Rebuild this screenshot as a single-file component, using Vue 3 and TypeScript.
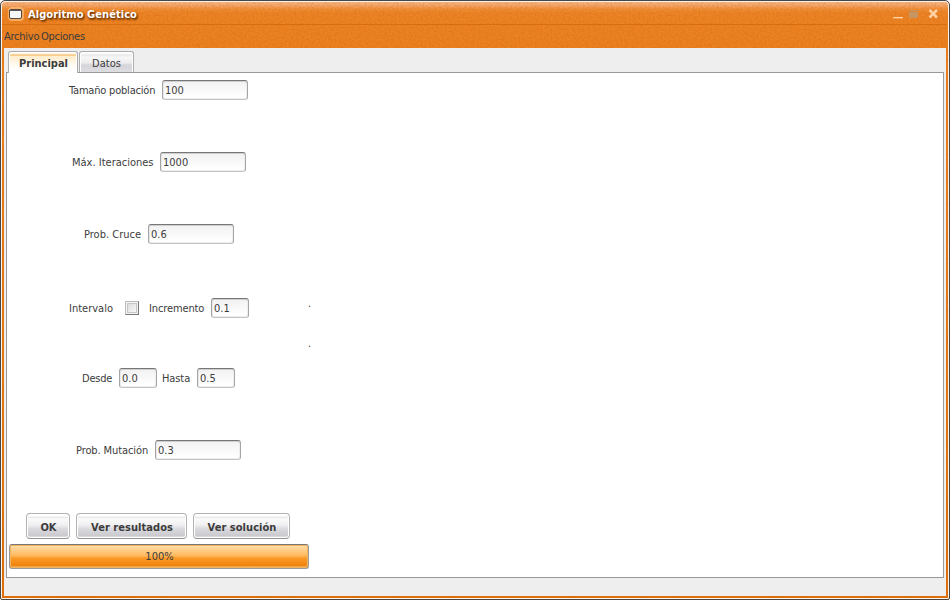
<script setup lang="ts">
import { ref } from 'vue'

interface Field {
  label: string
  value: string
  kind: string
}

const rows = ref<{ name: string; fields: Field[] }[]>([
  { name: 'population', fields: [{ label: 'Tamaño población', value: '100', kind: 'wide' }] },
  { name: 'iterations', fields: [{ label: 'Máx. Iteraciones', value: '1000', kind: 'wide' }] },
  { name: 'crossover', fields: [{ label: 'Prob. Cruce', value: '0.6', kind: 'wide' }] },
  {
    name: 'interval',
    fields: [
      { label: 'Intervalo', value: '', kind: 'check' },
      { label: 'Incremento', value: '0.1', kind: 'small' },
    ],
  },
  {
    name: 'range',
    fields: [
      { label: 'Desde', value: '0.0', kind: 'small' },
      { label: 'Hasta', value: '0.5', kind: 'small' },
    ],
  },
  { name: 'mutation', fields: [{ label: 'Prob. Mutación', value: '0.3', kind: 'wide' }] },
])
const progress = ref(100)
</script>

<template>
  <div class="window">
    <svg class="grain" width="950" height="600" aria-hidden="true">
      <filter id="noise" x="0" y="0" width="100%" height="100%" color-interpolation-filters="sRGB">
        <feTurbulence type="fractalNoise" baseFrequency="0.5" numOctaves="2" seed="4" />
        <feColorMatrix values="0 0 0 0 0.74  0 0 0 0 0.36  0 0 0 0 0.05  3 0 0 0 -1.1" />
      </filter>
      <rect width="950" height="600" filter="url(#noise)" />
    </svg>
    <header class="titlebar">
      <svg class="appicon" width="18" height="16" viewBox="0 0 18 16">
        <rect x="1" y="1" width="16" height="14" rx="4" fill="#ffc78c" opacity=".6" />
        <rect x="2.5" y="3.5" width="12" height="9" rx="1.5" fill="#f5f6f8" stroke="#504842" />
        <path d="M3 4.5h11" stroke="#5c5550" />
      </svg>
      <h1 class="title">Algoritmo Genético</h1>
      <svg class="controls" width="48" height="14" viewBox="0 0 48 14">
        <path d="M1 10.5h10" stroke="#ffd3a3" />
        <path d="M1 11.5h10" stroke="#ef9b50" />
        <rect x="17" y="3" width="9" height="8" fill="#c69561" />
        <path d="M17 4.5h9" stroke="#d98736" />
        <path d="M37.5 3l7.5 7.5M45 3l-7.5 7.5" stroke="#ffd0a0" stroke-width="2.5" />
      </svg>
    </header>
    <nav class="menubar"><span class="m1">Archivo</span><span class="m2">Opciones</span></nav>
    <main class="content">
      <div class="tabs">
        <div class="tab active"><span>Principal</span></div>
        <div class="tab"><span>Datos</span></div>
      </div>
      <section class="panel">
        <div class="form">
          <div v-for="row in rows" :key="row.name" class="row" :class="row.name">
            <template v-for="field in row.fields" :key="field.label">
              <label class="label" :class="field.label.toLowerCase()">{{ field.label }}</label>
              <span v-if="field.kind === 'check'" class="check"></span>
              <span v-else class="input" :class="field.kind">{{ field.value }}</span>
            </template>
          </div>
          <div class="buttons">
            <button class="btn ok"><span>OK</span></button>
            <button class="btn results"><span>Ver resultados</span></button>
            <button class="btn solution"><span>Ver solución</span></button>
          </div>
          <div class="progress"><span>{{ progress }}%</span></div>
        </div>
        <div class="output"><span>.</span><span>.</span></div>
      </section>
    </main>
  </div>
</template>

<style>
body { margin: 0; overflow: hidden; }
</style>

<style scoped>
.window {
  box-sizing: border-box;
  position: relative;
  width: 950px;
  height: 600px;
  border: 1px solid #474747;
  border-radius: 5px 5px 2px 2px;
  padding: 1px 2px 1px 1px;
  font: 11px "DejaVu Sans Condensed", "DejaVu Sans", sans-serif;
  font-stretch: condensed;
  color: #3c3c3c;
  background: linear-gradient(#f7bb8d 0, #f5ab70 4px, #f08f38 8px, #ed8425 12px, #eb811f 50px, #e0700e 100%);
  overflow: hidden;
}
.grain { position: absolute; left: 0; top: 0; opacity: .2; }
.window::after {
  content: "";
  position: absolute;
  inset: 0;
  border: 1px solid #fdf3e9;
  border-radius: 4px 4px 1px 1px;
}
.titlebar {
  position: relative;
  box-sizing: border-box;
  display: flex;
  align-items: center;
  height: 23px;
  padding: 1px 7px 0 5px;
  border-bottom: 1px solid #d96d0b;
}
.title {
  flex: 1;
  margin: 2px 0 0 3px;
  font-size: 11px;
  line-height: 14px;
  letter-spacing: .06px;
  color: #fff;
  text-shadow: 1px 1px 2px #643000, 1px 2px 2px #8a4505;
}
.menubar {
  position: relative;
  display: flex;
  height: 23px;
  padding-left: 2px;
  line-height: 23px;
  letter-spacing: -.25px;
}
.m1 { width: 37px; }
.m2 { width: 50px; }
.content {
  position: relative;
  box-sizing: border-box;
  margin-left: 2px;
  width: 942px;
  height: 548px;
  padding: 3px 2px 0;
  background: #eee;
}
.tabs { display: flex; align-items: flex-end; height: 21px; padding-left: 2px; gap: 1px; }
.tab {
  box-sizing: border-box;
  width: 55px;
  height: 21px;
  padding-top: 2px;
  border: 1px solid #adadad;
  border-bottom: 0;
  border-radius: 3px 3px 0 0;
  box-shadow: inset 1px 1px 0 #fff, inset -1px 0 0 #fff;
  background: linear-gradient(#fafafa 0 2px, #e7e7e7 3px, #f7f7f7 5px, #ececee 11px, #d4d4d9 13px, #dedee2);
  text-align: center;
  line-height: 19px;
}
.tab.active {
  position: relative;
  width: 70px;
  height: 22px;
  margin-bottom: -1px;
  padding-left: 1px;
  background: linear-gradient(#fff7e9 0 2px, #efad49 3px, #ffefd1 4px, #ffedce 6px, #fff8ea 11px, #fff 17px);
  font-weight: bold;
}
.panel {
  box-sizing: border-box;
  display: flex;
  width: 938px;
  height: 506px;
  padding-left: 2px;
  border: 1px solid #999;
  background: #fff;
}
.form { width: 300px; padding-top: 7px; }
.row {
  box-sizing: border-box;
  display: flex;
  justify-content: center;
  align-items: center;
  gap: 5px;
  height: 20px;
  margin-bottom: 52px;
}
.population, .range, .mutation { padding-right: 1px; }
.crossover { margin-bottom: 54px; }
.interval { margin-bottom: 50px; }
.mutation { margin-bottom: 0; }
.label { box-sizing: border-box; padding-top: 1px; white-space: nowrap; line-height: 20px; }
.population .label { width: 88px; letter-spacing: -.2px; }
.iterations .label { width: 83px; }
.crossover .label { width: 59px; }
.mutation .label { width: 74px; letter-spacing: -.1px; }
.intervalo { width: 51px; }
.incremento { width: 57px; letter-spacing: -.12px; }
.desde { width: 32px; letter-spacing: -.2px; }
.hasta { width: 30px; letter-spacing: -.1px; }
.input {
  box-sizing: border-box;
  height: 20px;
  padding-left: 2px;
  border: 1px solid #a5a5a5;
  border-top-color: #777;
  border-bottom-color: #c2c2c2;
  border-radius: 3px;
  box-shadow: inset 0 1px 0 #cfcfcf, inset 1px 0 0 #e8e8e8, inset -1px -1px 0 #eee;
  background: linear-gradient(#f1f1f1, #fff 16px);
  line-height: 19px;
}
.wide { width: 86px; }
.small { width: 38px; }
.check {
  box-sizing: border-box;
  width: 14px;
  height: 14px;
  margin-right: 5px;
  border: 1px solid #bcbcbc;
  border-right-color: #777;
  border-bottom-color: #777;
  box-shadow: inset 0 0 0 1px #f4f4f4, inset 0 0 0 2px #c6c6c6;
  background: linear-gradient(135deg, #d5d5d5, #fff);
}
.buttons { display: flex; gap: 6px; margin-top: 53px; padding-left: 17px; }
.btn {
  box-sizing: border-box;
  height: 26px;
  padding: 1px 0 0 1px;
  border: 1px solid #b2b2b2;
  border-bottom-color: #929292;
  border-radius: 4px;
  box-shadow: inset 0 0 0 1px #fff;
  background: linear-gradient(#fff 0 2px, #e8e8e8 3px, #fafafa 5px, #f0f0f2 11px, #dadade 15px, #cacace 22px, #fff);
  color: #3c3c3c;
  font: bold 11px/25px "DejaVu Sans Condensed", "DejaVu Sans", sans-serif;
  font-stretch: condensed;
  letter-spacing: .05px;
  white-space: nowrap;
}
.ok { width: 44px; }
.results { width: 111px; }
.solution { width: 97px; }
.progress {
  box-sizing: border-box;
  height: 25px;
  margin-top: 5px;
  border: 1px solid #999;
  border-top: 1px solid #777;
  border-radius: 3px;
  box-shadow: inset 0 0 0 1px #f2b35e, inset 0 -2px 0 #f1a34a;
  background: linear-gradient(#ffe0ad 0, #ffd291 4px, #ffb65a 11px, #fb9a28 13px, #ed7f09 22px);
  text-align: center;
  line-height: 23px;
}
.progress span { padding-left: 1px; }
.output { display: flex; flex-direction: column; gap: 20px; margin-left: -1px; padding-top: 221px; line-height: 20px; }
</style>
